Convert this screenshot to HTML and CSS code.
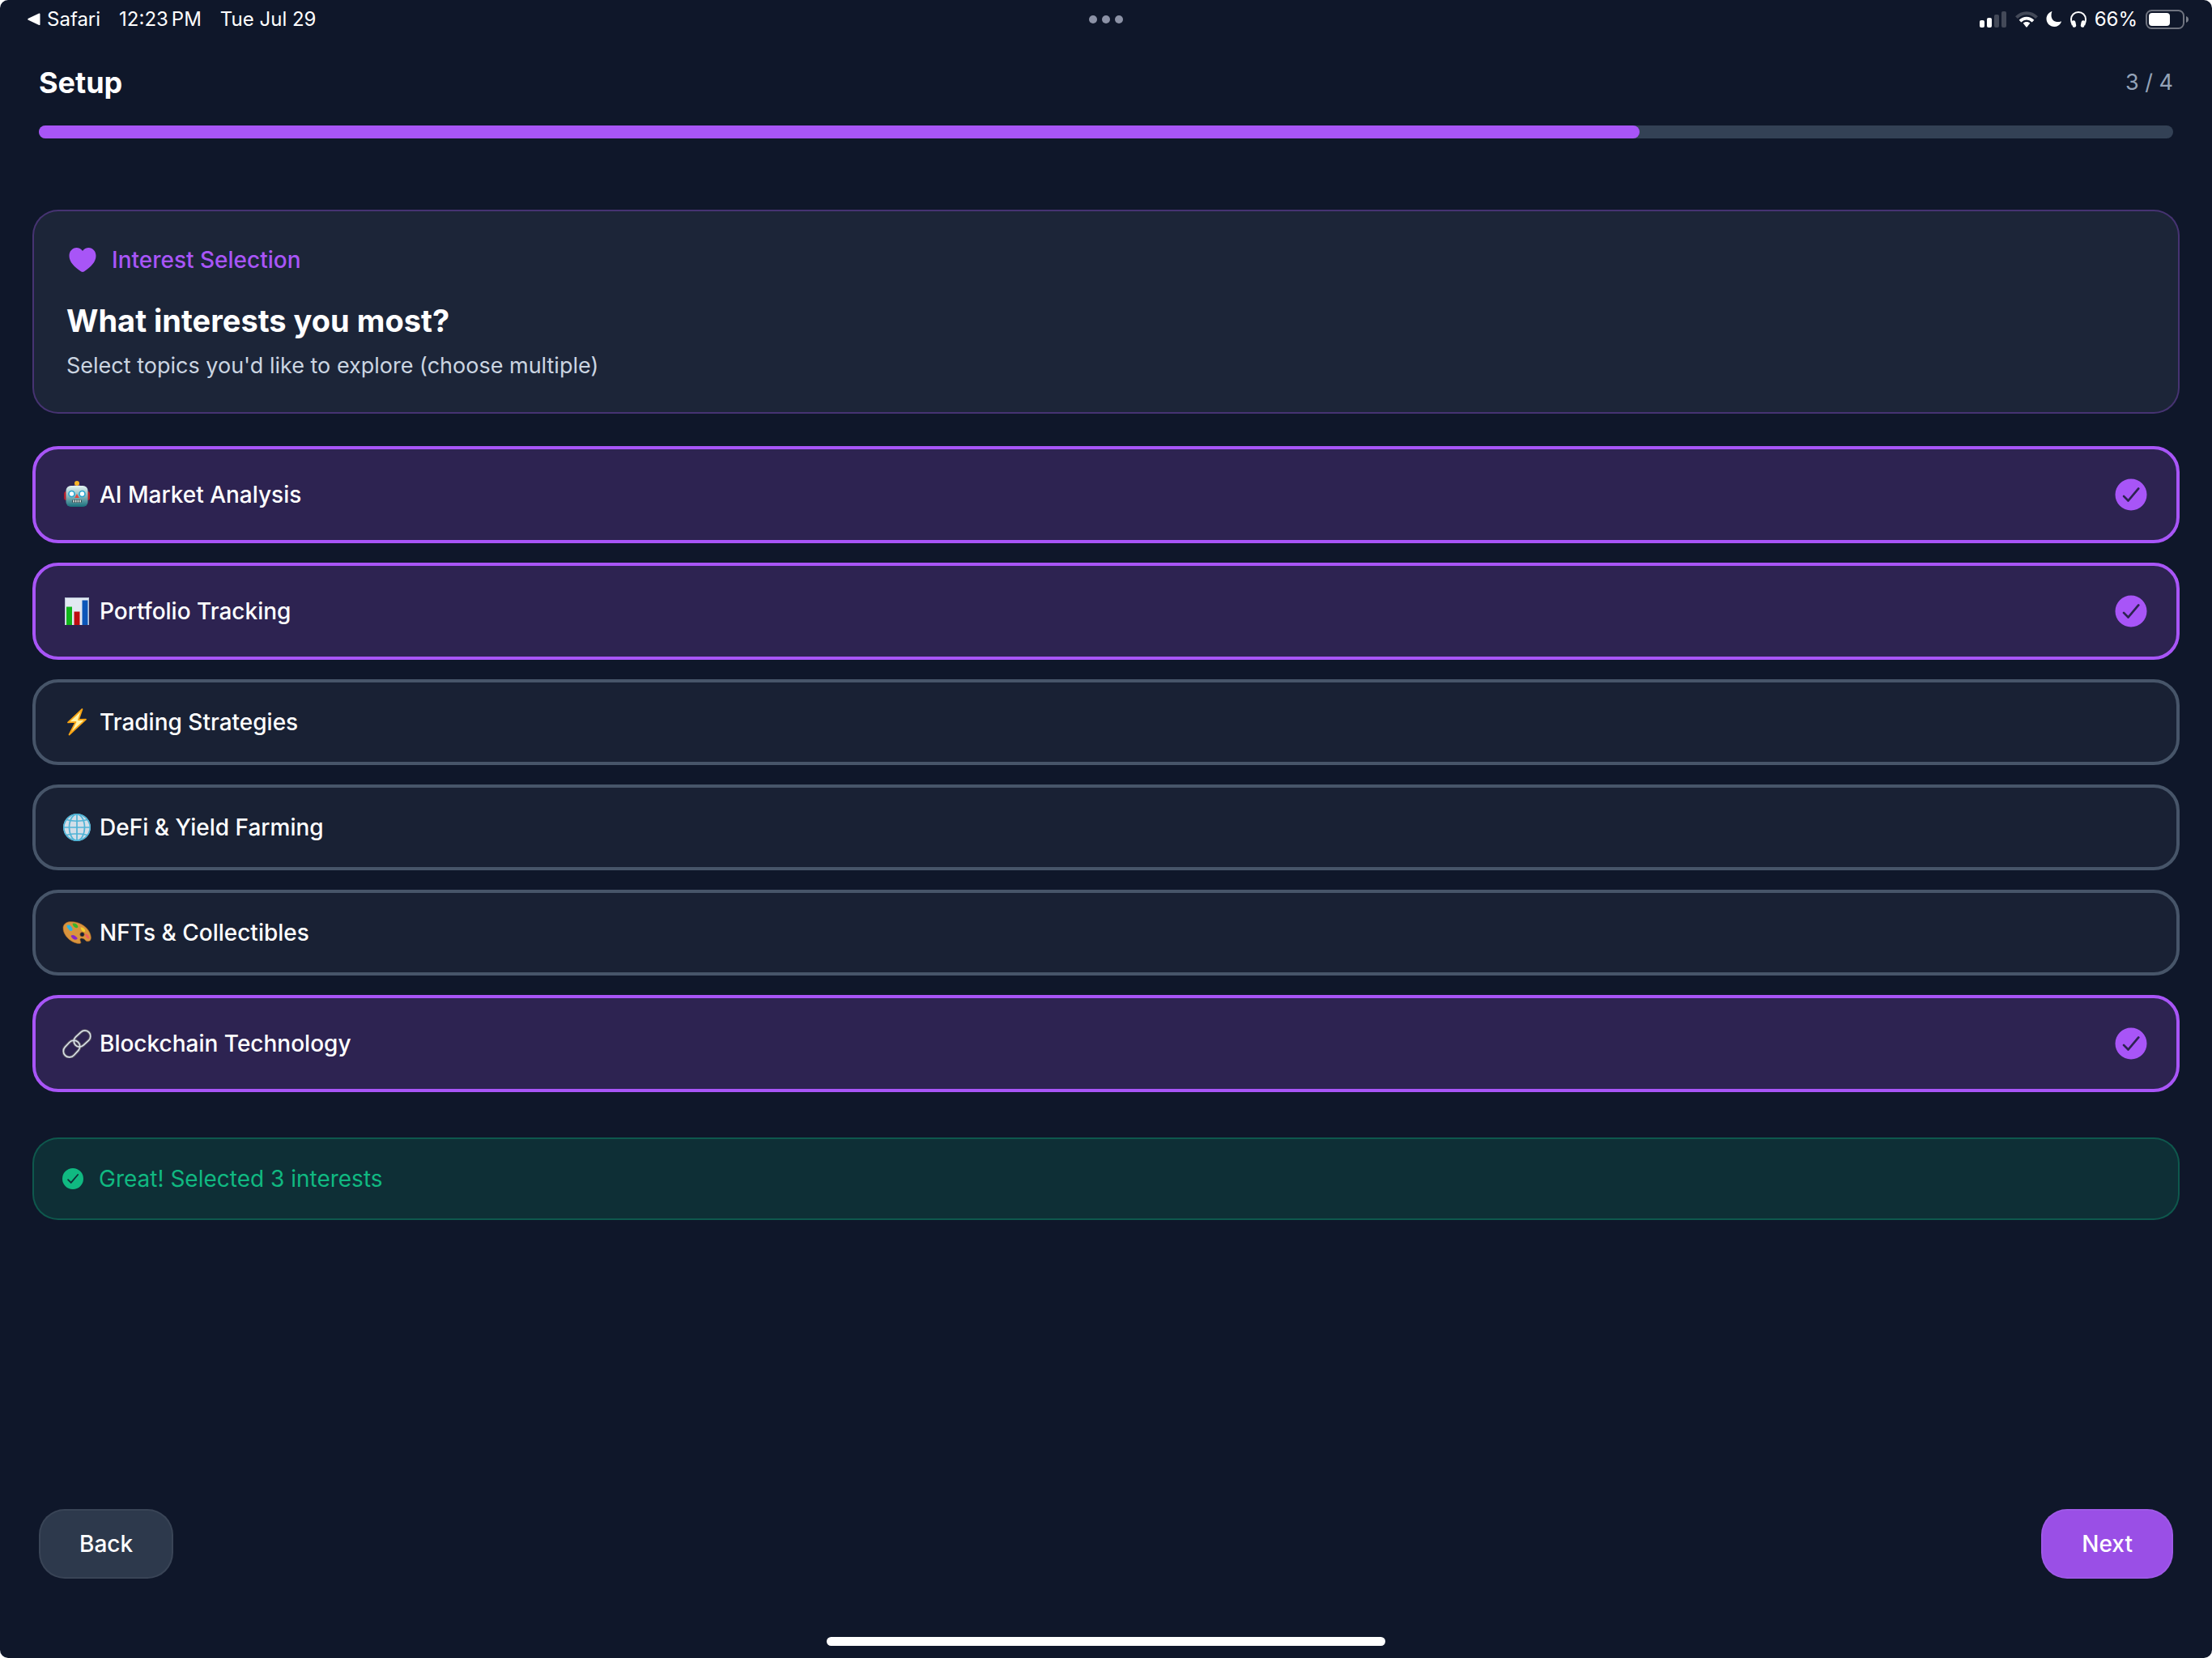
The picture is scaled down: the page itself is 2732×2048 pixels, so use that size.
FILE: index.html
```html
<!DOCTYPE html>
<html lang="en">
<head>
    <meta charset="UTF-8">
    <meta name="viewport" content="width=device-width, initial-scale=1.0">
    <title>Setup</title>
    <link rel="stylesheet" href="styles.css">
</head>
<body>

<!-- Shared check mark -->
<svg class="defs" width="0" height="0" aria-hidden="true">
    <symbol id="check" viewBox="0 0 48 48">
        <path fill="currentColor" fill-rule="evenodd" d="M24 4.500a19.500 19.500 0 1 0 0 39 19.500 19.500 0 0 0 0-39zm10.300 12.800L21.600 32.300a1.350 1.350 0 0 1-2 .1l-5.600-5.600a1.350 1.350 0 0 1 1.900-1.900l4.600 4.500 11.700-13.800a1.350 1.350 0 0 1 2.100 1.700z"/>
    </symbol>
</svg>

<div class="app">
    <!-- Status bar -->
    <div class="status-bar">
        <div class="status-left">
            <a class="back-app" href="#">
                <svg width="16" height="16" viewBox="0 0 16 16"><path fill="#fff" d="M14.200.6 1 6.700c-1 .5-1 1.600 0 2.100l13.200 6.200c.8.300 1.300-.1 1.300-.8V1.400c0-.7-.5-1.100-1.300-.8z"/></svg>
                Safari
            </a>
            <span>12:23&#8198;PM</span>
            <span>Tue Jul 29</span>
        </div>
        <div class="dots"><i></i><i></i><i></i></div>
        <div class="status-right">
            <svg width="34" height="20" viewBox="0 0 34 20" fill="#fff">
                <rect x="0" y="11" width="6" height="9" rx="2"/>
                <rect x="9" y="8" width="6" height="12" rx="2"/>
                <rect x="18" y="4" width="6" height="16" rx="2" opacity=".22"/>
                <rect x="27" y="0" width="6" height="20" rx="2" opacity=".22"/>
            </svg>
            <svg width="28" height="20" viewBox="0 0 28 20">
                <path fill="none" stroke="#fff" stroke-opacity=".22" stroke-width="4" d="M1.500 7.600C8.500.3 19.500.3 26.500 7.600"/>
                <path fill="none" stroke="#fff" stroke-width="3.800" d="M6 12.200c4.800-4.700 11.200-4.700 16 0"/>
                <path fill="#fff" d="M14 13c-1.800 0-3.200.6-4.300 1.600L13.300 19.300q.7.800 1.400 0l3.600-4.700C17.200 13.600 15.800 13 14 13z"/>
            </svg>
            <svg width="20" height="20" viewBox="0 0 20 20"><path fill="#fff" d="M7.300.6C7.600.1 7.100-.1 6.600.2 3 1.700.5 5.200.5 9.300c0 5.500 4.400 9.700 9.800 9.700 4 0 7.200-2.300 8.600-5.900.2-.6-.1-.9-.7-.6-1 .4-2.100.6-3.300.6-5 0-8.400-3.300-8.400-8.200 0-1.500.3-3 .8-4.300z"/></svg>
            <svg width="20" height="20" viewBox="0 0 20 20">
                <path fill="none" stroke="#fff" stroke-width="2" d="M2.800 17C1.600 14.500 1 12.200 1 9.800 1 4.700 5 1 10 1s9 3.700 9 8.800c0 2.400-.6 4.700-1.800 7.200"/>
                <rect x="2.200" y="11.200" width="4.600" height="8.600" rx="2.300" fill="#fff" transform="rotate(-12 4.500 15.500)"/>
                <rect x="13.200" y="11.200" width="4.600" height="8.600" rx="2.300" fill="#fff" transform="rotate(12 15.500 15.500)"/>
            </svg>
            <span>66%</span>
            <svg width="54" height="24" viewBox="0 0 54 24">
                <rect x="1" y="1" width="46" height="22" rx="6.500" fill="none" stroke="#fff" stroke-opacity=".4" stroke-width="2"/>
                <rect x="4" y="4" width="26" height="16" rx="4" fill="#fff"/>
                <path fill="#fff" fill-opacity=".45" d="M50 8c2 .7 3 2.200 3 4s-1 3.300-3 4z"/>
            </svg>
        </div>
    </div>

    <!-- Setup progress -->
    <header class="header">
        <h1>Setup</h1>
        <span class="step">3 / 4</span>
    </header>
    <div class="progress" role="progressbar" aria-valuenow="3" aria-valuemin="0" aria-valuemax="4">
        <div class="progress-fill" style="width: 75%"></div>
    </div>

    <main class="content">
        <section class="intro">
            <div class="intro-tag">
                <svg width="40" height="40" viewBox="0 0 40 40"><path fill="#a855f7" d="M20 35c-.6 0-1.200-.2-1.700-.5C9.500 28.500 3.500 22.500 3.500 15c0-5.600 4-10 9-10 3 0 5.700 1.500 7.500 4 1.800-2.500 4.500-4 7.500-4 5 0 9 4.400 9 10 0 7.500-6 13.500-14.800 19.500-.5.300-1.100.5-1.700.5z"/></svg>
                Interest Selection
            </div>
            <h2>What interests you most?</h2>
            <p>Select topics you'd like to explore (choose multiple)</p>
        </section>

        <!-- Interests -->
        <form class="options">
            <label class="option">
                <input type="checkbox" name="interest" value="ai" checked>
                <svg class="emoji" width="36" height="36" viewBox="0 0 36 36">
                    <defs><linearGradient id="bot" x2="0" y2="1"><stop offset="0" stop-color="#e4f4f3"/><stop offset=".5" stop-color="#86b5ba"/><stop offset="1" stop-color="#176f7b"/></linearGradient></defs>
                    <rect x="2" y="14" width="6" height="11" rx="3" fill="#b51e2b"/>
                    <rect x="28" y="14" width="6" height="11" rx="3" fill="#b51e2b"/>
                    <path fill="#694d91" d="M14 8c0-5 8-5 8 0z"/>
                    <circle cx="18" cy="4" r="3" fill="#f8b526"/>
                    <rect x="4.500" y="7" width="27" height="26" rx="6" fill="url(#bot)"/>
                    <circle cx="11.500" cy="17" r="3.500" fill="#fff" stroke="#27a5cf" stroke-width="1.600"/>
                    <circle cx="24.500" cy="17" r="3.500" fill="#fff" stroke="#27a5cf" stroke-width="1.600"/>
                    <path fill="#e3483f" d="m18 17 2.800 5h-5.600z"/>
                    <rect x="12" y="24" width="12" height="4" rx="1.500" fill="#314b52"/>
                    <path stroke="#e9f1e9" stroke-width="1.500" d="M14 24.500v3m2.700-3v3m2.700-3v3m2.700-3v3"/>
                </svg>
                <span class="option-name">AI Market Analysis</span>
                <svg class="tick" width="48" height="48"><use href="#check"/></svg>
            </label>
            <label class="option">
                <input type="checkbox" name="interest" value="portfolio" checked>
                <svg class="emoji" width="36" height="36" viewBox="0 0 36 36">
                    <rect x="3" y="1" width="30" height="34" fill="#e2e9f2"/>
                    <path fill="none" stroke="#b9c5d6" stroke-width="1" d="M3.500 35V1.500h29V35"/>
                    <rect x="5" y="12.500" width="7" height="22.500" fill="#10b51b"/>
                    <rect x="14.500" y="18.500" width="7" height="16.500" fill="#bd0d10"/>
                    <rect x="24.500" y="4.500" width="7" height="30.500" fill="#0c56b9"/>
                </svg>
                <span class="option-name">Portfolio Tracking</span>
                <svg class="tick" width="48" height="48"><use href="#check"/></svg>
            </label>
            <label class="option">
                <input type="checkbox" name="interest" value="trading">
                <svg class="emoji" width="36" height="36" viewBox="0 0 36 36">
                    <path fill="#fff3a6" stroke="#f6a313" stroke-width="1.800" stroke-linejoin="round" d="M24.500 2 7 18.300l9.500-.4L8.500 33.500l20.500-18.800-9 .3z"/>
                </svg>
                <span class="option-name">Trading Strategies</span>
                <svg class="tick" width="48" height="48"><use href="#check"/></svg>
            </label>
            <label class="option">
                <input type="checkbox" name="interest" value="defi">
                <svg class="emoji" width="36" height="36" viewBox="0 0 36 36">
                    <circle cx="18" cy="18" r="16.800" fill="#d3dee8"/>
                    <g fill="none" stroke="#50b4d6" stroke-width="1.700">
                        <circle cx="18" cy="18" r="16.200"/>
                        <ellipse cx="18" cy="18" rx="9.500" ry="16.200"/>
                        <path d="M18 2v32M2 18h32M5 8.500q13 3.500 26 0M5 27.500q13-3.500 26 0"/>
                    </g>
                </svg>
                <span class="option-name">DeFi &amp; Yield Farming</span>
                <svg class="tick" width="48" height="48"><use href="#check"/></svg>
            </label>
            <label class="option">
                <input type="checkbox" name="interest" value="nfts">
                <svg class="emoji" width="36" height="36" viewBox="0 0 36 36">
                    <path fill="#d9943d" stroke="#a7651f" stroke-width=".6" fill-rule="evenodd" d="M1 11C2.500 4.500 9.500 3.500 17 5.200 26.500 7.400 35 15 35.400 24c.2 4.500-3.800 6-6.500 4-2.200-3.500-7.500-4-7-1 .2 1.500 2.300 4-.4 4.500C12.500 32 0 22 1 11zm23.500 6.500a2.700 2.700 0 1 0 0 5.400 2.700 2.700 0 0 0 0-5.400z"/>
                    <path fill="#2fb3df" d="M5.500 9c3-1.500 6 .5 7.300 5.200-1 2.500-3.800 2.200-4.500.4-.5-1.500-3-2.600-2.800-5.600z"/>
                    <path fill="#38b52a" d="M12.500 7c2.500-1.500 6.500.5 7 4-1.500 2.500-6 1-7-4z"/>
                    <path fill="#f4d02b" d="M22.500 11.500c3-.5 6 2 5.700 5-2 1.500-5-.5-5.700-5z"/>
                    <path fill="#f0605b" d="M28 19.500c3-.5 6 3 5.500 6-2.500.8-5.500-2.500-5.500-6z"/>
                    <path fill="#8427c4" d="M10.500 22c1.500-2 5-1.500 8.300 3-1 3-6.500 2-8.300-3z"/>
                </svg>
                <span class="option-name">NFTs &amp; Collectibles</span>
                <svg class="tick" width="48" height="48"><use href="#check"/></svg>
            </label>
            <label class="option">
                <input type="checkbox" name="interest" value="blockchain" checked>
                <svg class="emoji" width="36" height="36" viewBox="0 0 36 36">
                    <g fill="none">
                        <g stroke="#5b5561" stroke-width="3.600">
                            <rect x="13" y="5" width="23" height="14" rx="7" transform="rotate(-43 24.500 12)"/>
                            <rect x="0" y="17" width="23" height="15" rx="7.500" transform="rotate(-47 11.500 24.500)"/>
                        </g>
                        <g stroke="#d5dee7" stroke-width="1.700">
                            <rect x="13" y="5" width="23" height="14" rx="7" transform="rotate(-43 24.500 12)"/>
                            <rect x="0" y="17" width="23" height="15" rx="7.500" transform="rotate(-47 11.500 24.500)"/>
                        </g>
                    </g>
                </svg>
                <span class="option-name">Blockchain Technology</span>
                <svg class="tick" width="48" height="48"><use href="#check"/></svg>
            </label>
        </form>

        <div class="notice" role="status">
            <svg width="32" height="32"><use href="#check"/></svg>
            Great! Selected 3 interests
        </div>
    </main>

    <footer class="footer">
        <button class="btn btn-back" type="button">Back</button>
        <button class="btn btn-next" type="button">Next</button>
    </footer>
    <div class="home-bar"></div>
</div>

</body>
</html>
```
FILE: styles.css
```css
* {
    box-sizing: border-box;
}
body {
    margin: 0;
    background: #fff;
    color: #fff;
    font-family: Inter, "Liberation Sans", sans-serif;
    font-size: 28px;
    line-height: 34px;
}
svg {
    display: block;
    flex: none;
}
h1, h2, p {
    margin: 0;
}
.defs {
    position: absolute;
}
.app {
    display: flex;
    flex-direction: column;
    min-height: 100vh;
    background: #0f172a;
    border-radius: 10px;
}

/* Status bar */
.status-bar {
    display: grid;
    grid-template-columns: 1fr auto 1fr;
    align-items: center;
    height: 48px;
    padding: 0 28px;
    font-size: 24px;
}
.status-left, .status-right, .back-app, .dots {
    display: flex;
    align-items: center;
}
.status-left {
    gap: 23px;
}
.back-app {
    gap: 8px;
    padding-left: 6px;
    color: #fff;
    text-decoration: none;
}
.dots {
    gap: 6px;
}
.dots i {
    width: 10px;
    height: 10px;
    border-radius: 50%;
    background: #8c92a6;
}
.status-right {
    justify-content: flex-end;
    gap: 10px;
}

/* Header and progress */
.header {
    display: flex;
    justify-content: space-between;
    align-items: center;
    height: 107px;
    padding: 0 48px;
}
.header h1 {
    font-size: 36px;
    line-height: 44px;
}
.step {
    color: #94a3b8;
    font-size: 27px;
}
.progress {
    height: 16px;
    margin: 0 48px;
    border-radius: 8px;
    background: #334155;
}
.progress-fill {
    height: 100%;
    border-radius: 8px;
    background: #a855f7;
}

/* Content */
.content {
    padding: 88px 40px 40px;
}
.intro {
    margin-bottom: 40px;
    padding: 40px;
    border: 2px solid rgba(168, 85, 247, 0.3);
    border-radius: 32px;
    background: #1c2538;
}
.intro-tag {
    display: flex;
    align-items: center;
    gap: 16px;
    height: 40px;
    margin-bottom: 32px;
    color: #a855f7;
    font-weight: 500;
}
.intro h2 {
    margin-bottom: 16px;
    font-size: 38px;
    line-height: 46px;
}
.intro p {
    color: #cbd5e1;
    font-size: 27px;
}
.options {
    display: flex;
    flex-direction: column;
    gap: 24px;
}
.option {
    display: flex;
    align-items: center;
    padding: 32px;
    border: 4px solid #475569;
    border-radius: 32px;
    background: #192134;
    font-weight: 500;
    cursor: pointer;
}
.option input {
    position: absolute;
    opacity: 0;
    pointer-events: none;
}
.option .emoji {
    margin: -1px 10px -1px 1px;
}
.option-name {
    flex: 1;
}
.tick {
    display: none;
    color: #a855f7;
}
.option:has(input:checked) {
    border-color: #a855f7;
    background: #2d2351;
}
.option input:checked ~ .tick {
    display: block;
}
.notice {
    display: flex;
    align-items: center;
    gap: 16px;
    margin-top: 56px;
    padding: 32px;
    border: 2px solid rgba(16, 185, 129, 0.3);
    border-radius: 32px;
    background: rgba(16, 185, 129, 0.15);
    color: #10b981;
}

/* Footer */
.footer {
    display: flex;
    justify-content: space-between;
    margin-top: auto;
    padding: 0 48px 72px;
}
.btn {
    padding: 24px 48px;
    border: 2px solid rgba(255, 255, 255, 0.06);
    border-radius: 32px;
    color: #fff;
    font: inherit;
    font-weight: 500;
    cursor: pointer;
}
.btn-back {
    background: #2d394c;
}
.btn-next {
    background: #9a4fe6;
}
.home-bar {
    width: 690px;
    max-width: 60%;
    height: 11px;
    margin: 0 auto 15px;
    border-radius: 6px;
    background: #fff;
}
```
